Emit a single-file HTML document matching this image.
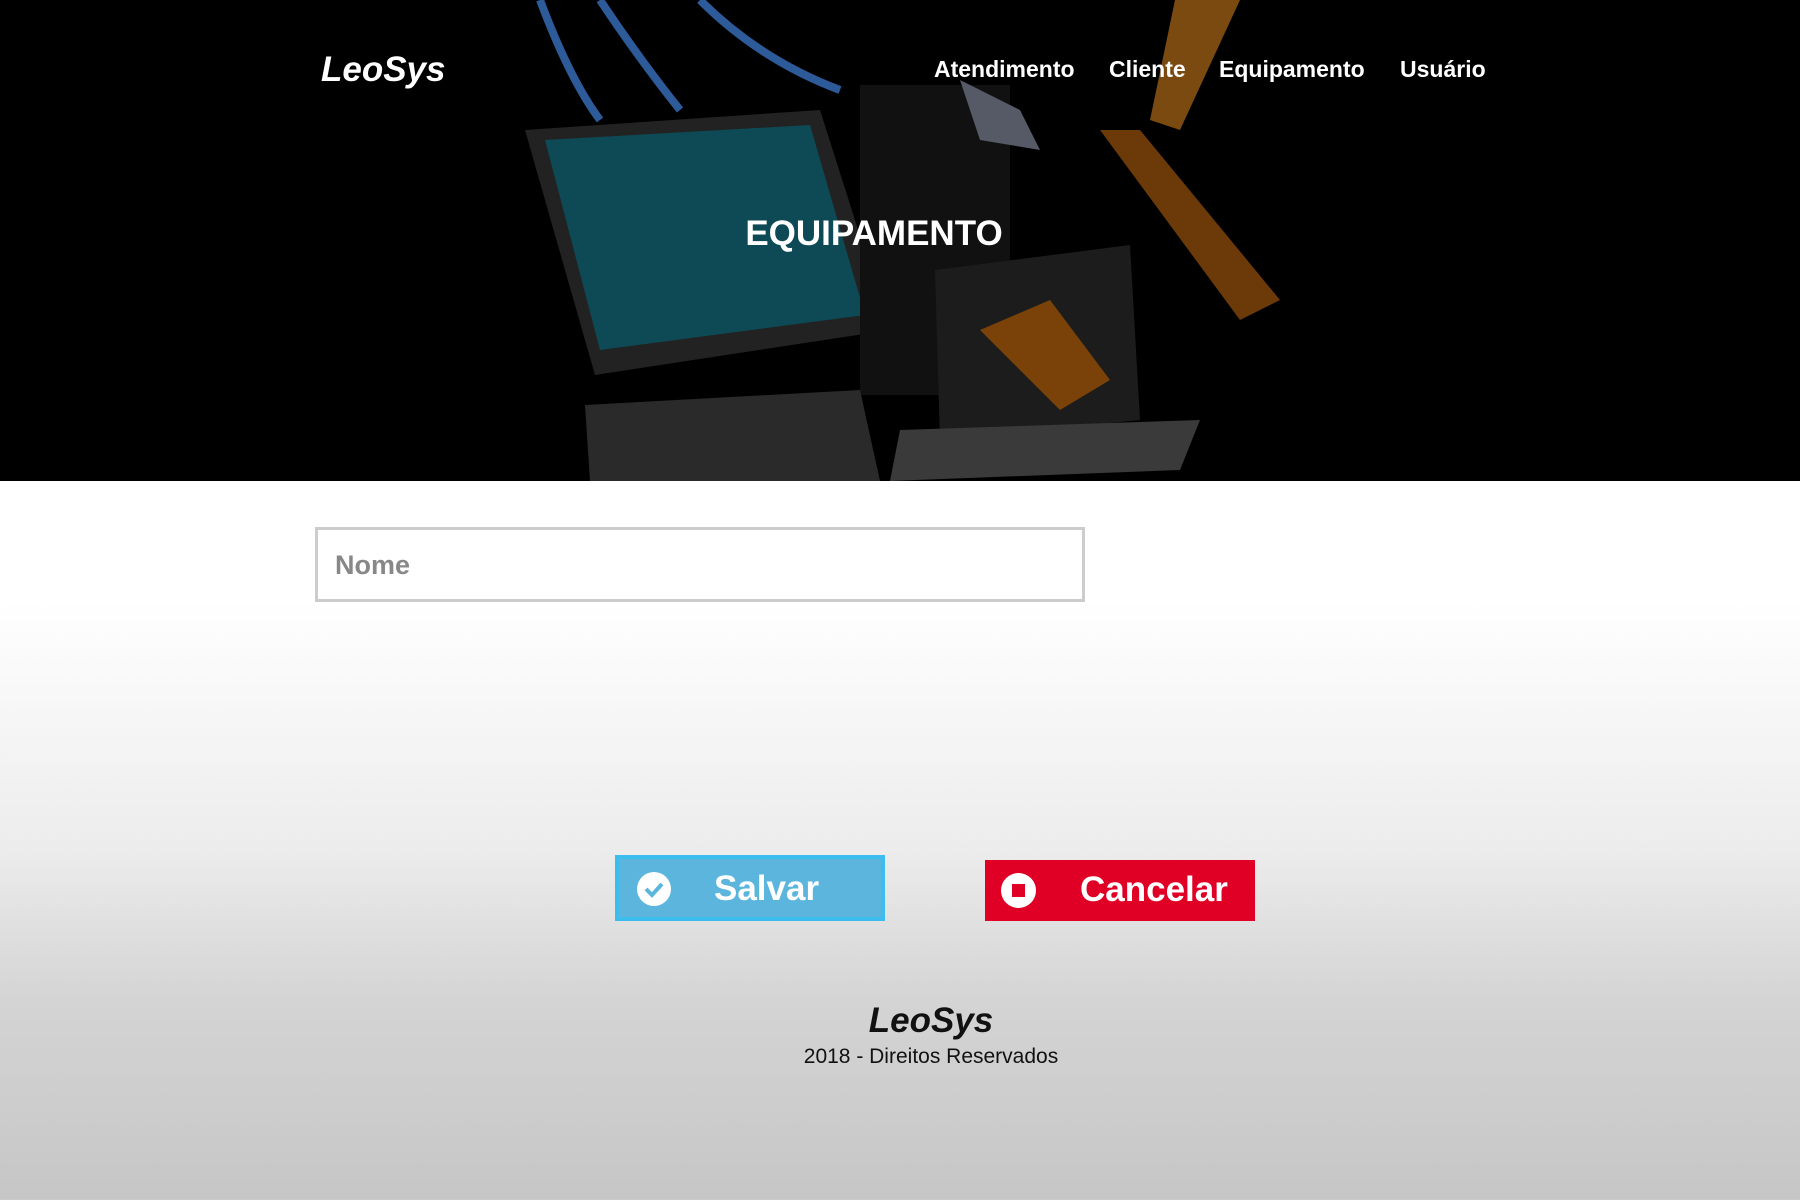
<!DOCTYPE html>
<html><head><style>
*{margin:0;padding:0;box-sizing:border-box}
body{width:1800px;height:1200px;overflow:hidden;font-family:"Liberation Sans",sans-serif;background:linear-gradient(#fff 0px,#fff 600px,#ececec 850px,#d4d4d4 1000px,#c6c6c6 1200px);position:relative}
.hero{position:absolute;left:0;top:0;width:1800px;height:481px;background:#000;overflow:hidden}
.abs{position:absolute}
.nav a{position:absolute;top:56px;color:#fff;font-weight:bold;font-size:23px;text-decoration:none}
.btn{position:absolute;color:#fff;font-weight:bold;font-size:35px}
</style></head><body>
<div class="hero">
<svg width="1800" height="481" class="abs" style="left:0;top:0">
<polygon points="525,130 820,110 890,330 595,375" fill="#222"/>
<polygon points="545,140 810,125 865,315 600,350" fill="#0d4a55"/>
<rect x="860" y="85" width="150" height="310" fill="#111"/>
<polygon points="585,405 860,390 880,481 590,481" fill="#2a2a2a"/>
<polygon points="935,270 1130,245 1140,420 940,440" fill="#1c1c1c"/>
<polygon points="900,430 1200,420 1180,470 890,481" fill="#3a3a3a"/>
<polygon points="1100,130 1140,130 1280,300 1240,320" fill="#6b3a08"/>
<polygon points="1175,0 1240,0 1180,130 1150,120" fill="#7a4a10"/>
<polygon points="980,330 1050,300 1110,380 1060,410" fill="#7a4209"/>
<polygon points="960,80 1020,110 1040,150 980,140" fill="#555a66"/>
<path d="M540,0 Q570,80 600,120 M600,0 Q640,60 680,110 M700,0 Q760,60 840,90" stroke="#2d5a99" stroke-width="8" fill="none"/>
</svg>
<div class="abs" style="left:321px;top:50px;color:#fff;font-weight:bold;font-style:italic;font-size:35px">LeoSys</div>
<div class="nav">
<a style="left:934px">Atendimento</a><a style="left:1109px">Cliente</a><a style="left:1219px">Equipamento</a><a style="left:1400px">Usuário</a>
</div>
<div class="abs" style="left:0;width:1748px;text-align:center;top:214px;color:#fff;font-weight:bold;font-size:35px">EQUIPAMENTO</div>
</div>
<div class="abs" style="left:315px;top:527px;width:770px;height:75px;border:3px solid #ccc;background:#fff;font-size:27px;font-weight:bold;color:#888;padding:20px 0 0 17px">Nome</div>
<div class="btn" style="left:615px;top:855px;width:270px;height:66px;background:#5bb5dc;border:4px solid #3dbdee">
<svg class="abs" style="left:18px;top:13px" width="34" height="34"><circle cx="17" cy="17" r="17" fill="#fff"/><path d="M9,17 l6,6 l10,-11" stroke="#5bb5dc" stroke-width="4" fill="none"/></svg>
<span class="abs" style="left:95px;top:10px">Salvar</span></div>
<div class="btn" style="left:985px;top:860px;width:270px;height:61px;background:#e00025">
<svg class="abs" style="left:16px;top:13px" width="35" height="35"><circle cx="17.5" cy="17.5" r="17.5" fill="#fff"/><rect x="11" y="11" width="13" height="13" fill="#e00025"/></svg>
<span class="abs" style="left:95px;top:10px">Cancelar</span></div>
<div class="abs" style="left:0;width:1862px;text-align:center;top:1001px;font-weight:bold;font-style:italic;font-size:35px;color:#111">LeoSys</div>
<div class="abs" style="left:0;width:1862px;text-align:center;top:1045px;font-size:21px;color:#111">2018 - Direitos Reservados</div>
</body></html>
